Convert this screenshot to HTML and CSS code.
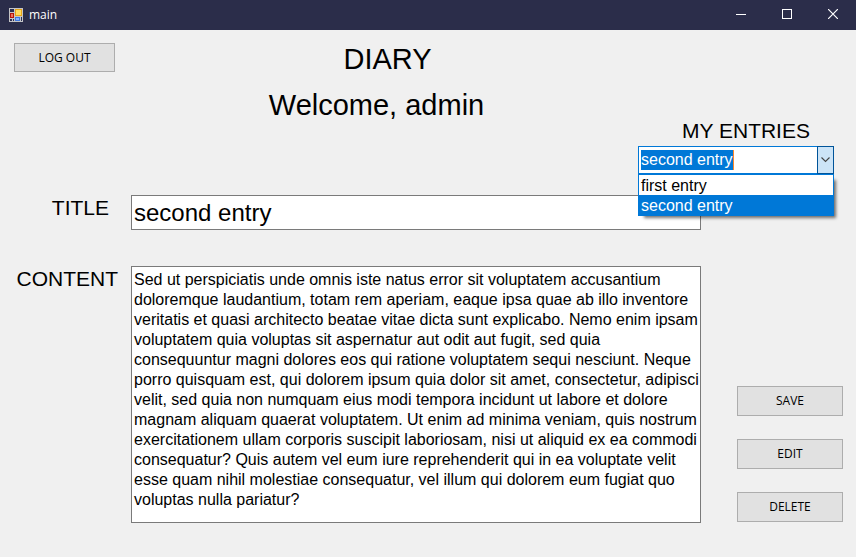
FILE: index.html
```html
<!DOCTYPE html>
<html lang="en">
<head>
<meta charset="utf-8">
<title>main</title>
<link rel="stylesheet" href="styles.css">
</head>
<body>
<header class="titlebar">
  <svg class="app-icon" viewBox="0 0 14 14" shape-rendering="crispEdges" aria-hidden="true">
    <rect width="14" height="14" fill="#c4c4c6"/>
    <rect x="1" y="1" width="4" height="3" fill="#2b2f55"/>
    <rect x="1" y="5" width="4" height="5" fill="#b3160c"/>
    <rect x="2" y="6" width="2" height="3" fill="#f0705c"/>
    <rect x="1" y="11" width="2" height="2" fill="#2b2f55"/>
    <rect x="4" y="11" width="1" height="2" fill="#2b2f55"/>
    <rect x="6" y="1" width="7" height="7" fill="#e6a417"/>
    <rect x="7" y="2" width="5" height="5" fill="#ffdc5e"/>
    <rect x="6" y="9" width="5" height="4" fill="#3f78dc"/>
    <rect x="7" y="10" width="3" height="2" fill="#86b4ff"/>
    <rect x="12" y="9" width="1" height="4" fill="#2b2f55"/>
  </svg>
  <span class="caption">main</span>
  <button class="window-button" type="button" aria-label="Minimize">
    <svg viewBox="0 0 10 10" shape-rendering="crispEdges"><rect y="5" width="10" height="1" fill="#fff"/></svg>
  </button>
  <button class="window-button" type="button" aria-label="Maximize">
    <svg viewBox="0 0 10 10" shape-rendering="crispEdges"><rect x=".5" y=".5" width="9" height="9" fill="none" stroke="#fff"/></svg>
  </button>
  <button class="window-button" type="button" aria-label="Close">
    <svg viewBox="0 0 10 10"><path d="M0 0L10 10M10 0L0 10" fill="none" stroke="#fff" stroke-width="1.2"/></svg>
  </button>
</header>
<main class="client">
  <section class="top">
    <button class="button logout" type="button">LOG OUT</button>
    <div class="headings">
      <h1 class="heading diary">DIARY</h1>
      <p class="heading">Welcome, admin</p>
    </div>
    <div class="entries">
      <label class="label entries-label" for="entry">MY ENTRIES</label>
      <div class="combo">
        <input class="combo-input" id="entry" type="text" value="second entry" role="combobox" aria-expanded="true" aria-controls="entry-list" autocomplete="off">
        <button class="combo-arrow" type="button" aria-label="Show entries">
          <svg viewBox="0 0 9 6"><path d="M.5 .5L4.500 4.500L8.500 .5" fill="none" stroke="#444" stroke-width="1.100"/></svg>
        </button>
        <ul class="combo-list" id="entry-list" role="listbox" aria-label="Entries">
          <li class="option" role="option" aria-selected="false">first entry</li>
          <li class="option selected" role="option" aria-selected="true">second entry</li>
        </ul>
      </div>
    </div>
  </section>
  <form class="editor">
    <label class="label title-label" for="title">TITLE</label>
    <input class="field title-field" id="title" type="text" value="second entry" autocomplete="off">
    <label class="label content-label" for="content">CONTENT</label>
    <textarea class="field content-field" id="content" spellcheck="false">Sed ut perspiciatis unde omnis iste natus error sit voluptatem accusantium
doloremque laudantium, totam rem aperiam, eaque ipsa quae ab illo inventore
veritatis et quasi architecto beatae vitae dicta sunt explicabo. Nemo enim ipsam
voluptatem quia voluptas sit aspernatur aut odit aut fugit, sed quia
consequuntur magni dolores eos qui ratione voluptatem sequi nesciunt. Neque
porro quisquam est, qui dolorem ipsum quia dolor sit amet, consectetur, adipisci
velit, sed quia non numquam eius modi tempora incidunt ut labore et dolore
magnam aliquam quaerat voluptatem. Ut enim ad minima veniam, quis nostrum
exercitationem ullam corporis suscipit laboriosam, nisi ut aliquid ex ea commodi
consequatur? Quis autem vel eum iure reprehenderit qui in ea voluptate velit
esse quam nihil molestiae consequatur, vel illum qui dolorem eum fugiat quo
voluptas nulla pariatur?</textarea>
    <div class="actions">
      <button class="button" type="button">SAVE</button>
      <button class="button" type="button">EDIT</button>
      <button class="button" type="button">DELETE</button>
    </div>
  </form>
</main>
<script src="script.js"></script>
</body>
</html>
```
FILE: styles.css
```css
* {
  box-sizing: border-box;
}

body {
  margin: 0;
  min-height: 100vh;
  display: flex;
  flex-direction: column;
  background: #f0f0f0;
  color: #000;
  font-family: "Liberation Sans", Arial, sans-serif;
  font-size: 16px;
}

.titlebar {
  display: flex;
  align-items: center;
  height: 30px;
  padding-left: 9px;
  background: #2b2d4a;
  color: #fff;
}

.app-icon {
  width: 14px;
  height: 14px;
  margin-right: 6px;
}

.caption {
  flex: 1;
  font: 12px/16px "Open Sans", sans-serif;
}

.window-button {
  display: flex;
  align-items: center;
  justify-content: center;
  align-self: flex-start;
  width: 46px;
  height: 28px;
  padding: 0;
  border: 0;
  background: none;
}

.window-button svg {
  width: 10px;
  height: 10px;
}

.client {
  flex: 1;
  display: flex;
  flex-direction: column;
}

.top {
  display: flex;
  padding: 13px 22px 21px 14px;
}

.button {
  height: 30px;
  padding: 0;
  border: 1px solid #adadad;
  background: #e1e1e1;
  color: #000;
  font: 12px/16px "Open Sans", sans-serif;
}

.logout {
  width: 101px;
  height: 29px;
}

.headings {
  flex: 1;
  text-align: center;
}

.heading {
  margin: 0 0 14px;
  font-size: 29px;
  line-height: 32px;
  font-weight: 400;
}

.diary {
  padding-left: 22px;
}

.entries {
  width: 196px;
  padding-top: 76px;
}

.label {
  font-size: 21px;
  line-height: 24px;
}

.entries-label {
  display: block;
  padding: 0 0 3px 44px;
}

.combo {
  position: relative;
  display: flex;
  height: 28px;
}

.combo-input {
  flex: 1;
  min-width: 0;
  padding: 0 2px 1px;
  border: 1px solid #0078d7;
  border-right: 0;
  outline: 0;
  background: #fff linear-gradient(#ff8728, #ff8728) 94px 3px / 1px 20px no-repeat;
  font: 16px/20px "Liberation Sans", Arial, sans-serif;
}

.combo-input::selection {
  background: #0078d7;
  color: #fff;
}

.combo-arrow {
  display: flex;
  align-items: center;
  justify-content: center;
  width: 17px;
  padding: 0;
  border: 1px solid #005499;
  background: #cce4f7;
}

.combo-arrow svg {
  width: 9px;
  height: 6px;
}

.combo-list {
  position: absolute;
  top: 28px;
  left: 0;
  right: 0;
  margin: 0;
  padding: 0;
  border: 1px solid #0078d7;
  background: #fff;
  box-shadow: 4px 4px 3px -2px rgba(0, 0, 0, 0.55);
  list-style: none;
}

.option {
  height: 20px;
  padding-left: 2px;
  line-height: 22px;
}

.selected {
  background: #0078d7;
  color: #fff;
}

.editor {
  flex: 1;
  display: grid;
  grid-template-columns: 118px 1fr 106px;
  grid-template-rows: 35px 1fr;
  row-gap: 36px;
  padding: 0 13px 34px 0;
}

.editor .label {
  grid-column: 1;
  padding-top: 1px;
  text-align: right;
}

.editor .title-label {
  padding-right: 9px;
}

.field {
  grid-column: 2;
  margin: 0 36px 0 13px;
  min-width: 0;
  padding: 3px 0 2px 2px;
  border: 1px solid #7a7a7a;
  border-radius: 0;
  outline: 0;
  background: #fff;
  color: #000;
  font-family: "Liberation Sans", Arial, sans-serif;
}

.title-field {
  font-size: 24px;
}

.content-field {
  resize: none;
  overflow: hidden;
  font-size: 16px;
  line-height: 20px;
}

.actions {
  grid-column: 3;
  grid-row: 2;
  display: flex;
  flex-direction: column;
  justify-content: flex-end;
  gap: 23px;
  padding-bottom: 1px;
}
```
FILE: script.js
```js
const entry = document.getElementById("entry");
entry.focus();
entry.select();
```
